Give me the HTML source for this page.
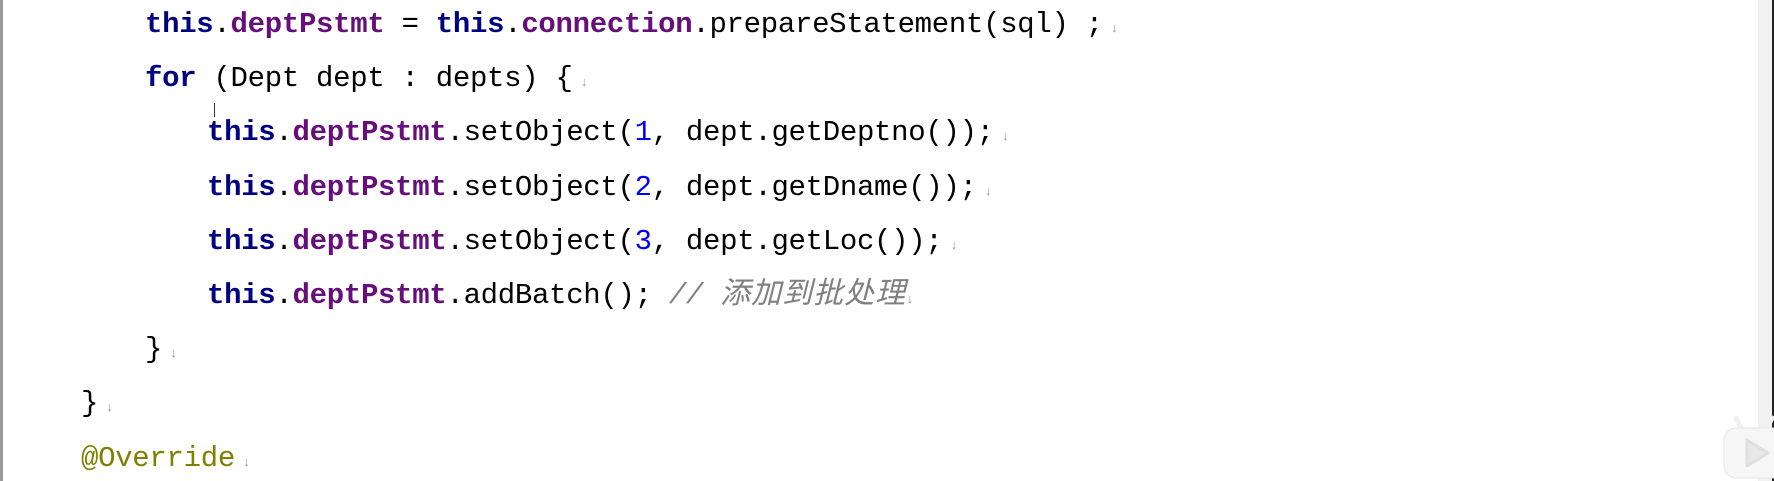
<!DOCTYPE html>
<html><head><meta charset="utf-8"><style>
body{margin:0;width:1774px;height:481px;background:#fff;overflow:hidden;position:relative;font-family:"Liberation Mono","Noto Sans CJK SC",monospace;}
.l{position:absolute;white-space:pre;font-size:29px;letter-spacing:-0.3px;color:#000;line-height:30px;}
.k{color:#000080;font-weight:bold}
.f{color:#660e7a;font-weight:bold}
.n{color:#0000ff}
.c{color:#808080;font-style:italic}
.cj{font-size:30px;letter-spacing:1px}
.a{color:#808000}
.m{color:#999;font-size:13px;letter-spacing:0}
</style></head><body>
<div style="position:absolute;left:0;top:0;width:3px;height:481px;background:#999"></div>
<div style="position:absolute;left:1758px;top:0;width:14px;height:481px;background:#f1f1f1"></div>
<div style="position:absolute;left:1772px;top:0;width:2px;height:481px;background:#222"></div>
<div class="l" style="left:145px;top:10px"><span class="k">this</span>.<span class="f">deptPstmt</span> = <span class="k">this</span>.<span class="f">connection</span>.prepareStatement(sql) ;<span class="m"> ↓</span></div>
<div class="l" style="left:145px;top:64px"><span class="k">for</span> (Dept dept : depts) {<span class="m"> ↓</span></div>
<div class="l" style="left:207px;top:118px"><span class="k">this</span>.<span class="f">deptPstmt</span>.setObject(<span class="n">1</span>, dept.getDeptno());<span class="m"> ↓</span></div>
<div class="l" style="left:207px;top:173px"><span class="k">this</span>.<span class="f">deptPstmt</span>.setObject(<span class="n">2</span>, dept.getDname());<span class="m"> ↓</span></div>
<div class="l" style="left:207px;top:227px"><span class="k">this</span>.<span class="f">deptPstmt</span>.setObject(<span class="n">3</span>, dept.getLoc());<span class="m"> ↓</span></div>
<div class="l" style="left:207px;top:281px"><span class="k">this</span>.<span class="f">deptPstmt</span>.addBatch(); <span class="c">// <span class="cj">添加到批处理</span></span><span class="m">↓</span></div>
<div class="l" style="left:145px;top:335px">}<span class="m"> ↓</span></div>
<div class="l" style="left:81px;top:389px">}<span class="m"> ↓</span></div>
<div class="l a" style="left:81px;top:444px">@Override<span class="m"> ↓</span></div>
<div style="position:absolute;left:214px;top:103px;width:1px;height:14px;background:#333"></div>
<svg style="position:absolute;left:1722px;top:412px" width="52" height="69" viewBox="0 0 52 69">
<path d="M20 18 L14 6 M44 18 L50 6" stroke="#f0f0f0" stroke-width="5" stroke-linecap="round"/>
<rect x="2" y="16" width="60" height="50" rx="12" fill="#f6f6f6" stroke="#e6e6e6"/>
<path d="M25 28 L25 54 L46 41 Z" fill="#e8e8e8" stroke="#e0e0e0" stroke-linejoin="round" stroke-width="3"/>
</svg>
</body></html>
